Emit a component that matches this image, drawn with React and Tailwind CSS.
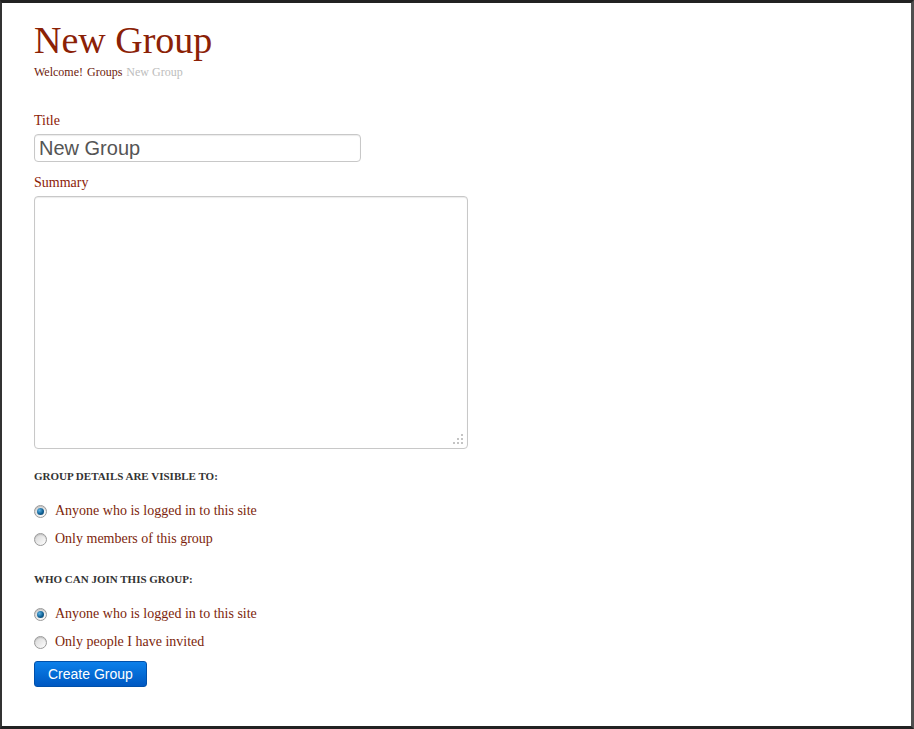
const serif = { fontFamily: '"Liberation Serif", "Times New Roman", serif' };

const Radio = ({ checked, label }) => (
  <label className="flex items-center h-[28px] text-[14px] leading-5 text-[#7d1f0c]">
    <span className="w-[13px] h-[13px] rounded-full border border-[#9a9a9a] bg-gradient-to-br from-[#d6d6d6] to-[#ffffff] flex items-center justify-center shadow-[inset_0_1px_1px_rgba(0,0,0,0.15)]">
      {checked && (
        <span className="w-[7px] h-[7px] rounded-full bg-[radial-gradient(circle_at_35%_35%,#5fb4e6,#0e5f93_55%,#123a5c)]" />
      )}
    </span>
    <span className="ml-[8px]">{label}</span>
  </label>
);

const SectionHead = ({ children, className }) => (
  <div className={`text-[11px] leading-4 font-bold text-[#333] ${className}`}>{children}</div>
);

export default function App() {
  return (
    <div
      className="w-[914px] h-[729px] bg-white border-t-[3px] border-b-[3px] border-l-2 border-r-[3px] border-t-[#222] border-b-[#222] border-l-[#333] border-r-[#505050] overflow-hidden"
      style={serif}
    >
      <div className="pl-[32px] pt-[17px] flex flex-col items-start">
        <h1 className="text-[38px] leading-[40px] text-[#8b2106]">New Group</h1>
        <div className="mt-[4px] text-[12px] leading-4 flex gap-[4px]">
          <span className="text-[#6e1a0c]">Welcome!</span>
          <span className="text-[#6e1a0c]">Groups</span>
          <span className="text-[#bdbdbd]">New Group</span>
        </div>

        <div className="mt-[31px] text-[14px] leading-5 text-[#8b2106]">Title</div>
        <input
          defaultValue="New Group"
          className="mt-[3px] w-[327px] h-[28px] px-[4px] rounded-[4px] border border-[#c8c8c8] shadow-[inset_0_1px_1px_rgba(0,0,0,0.08)] text-[20px] text-[#555] outline-none"
          style={{ fontFamily: '"Liberation Sans", Arial, sans-serif' }}
        />

        <div className="mt-[11px] text-[14px] leading-5 text-[#8b2106]">Summary</div>
        <div className="relative mt-[3px]">
          <textarea className="block w-[434px] h-[253px] rounded-[4px] border border-[#c8c8c8] shadow-[inset_0_1px_1px_rgba(0,0,0,0.08)] resize-none outline-none" />
          <svg className="absolute right-[4px] bottom-[4px]" width="12" height="12" viewBox="0 0 12 12">
            <g fill="#c4c4c4">
              <rect x="9" y="1" width="2" height="2" />
              <rect x="5" y="5" width="2" height="2" />
              <rect x="9" y="5" width="2" height="2" />
              <rect x="1" y="9" width="2" height="2" />
              <rect x="5" y="9" width="2" height="2" />
              <rect x="9" y="9" width="2" height="2" />
            </g>
          </svg>
        </div>

        <SectionHead className="mt-[19px]">GROUP DETAILS ARE VISIBLE TO:</SectionHead>
        <div className="mt-[13px] flex flex-col">
          <Radio checked label="Anyone who is logged in to this site" />
          <Radio label="Only members of this group" />
        </div>

        <SectionHead className="mt-[18px]">WHO CAN JOIN THIS GROUP:</SectionHead>
        <div className="mt-[13px] flex flex-col">
          <Radio checked label="Anyone who is logged in to this site" />
          <Radio label="Only people I have invited" />
        </div>

        <button
          className="mt-[5px] h-[26px] px-[13px] rounded-[3px] border border-[#0050aa] bg-gradient-to-b from-[#0d80ea] to-[#0058c2] text-white text-[14px] leading-none"
          style={{ fontFamily: '"Liberation Sans", Arial, sans-serif' }}
        >
          Create Group
        </button>
      </div>
    </div>
  );
}
